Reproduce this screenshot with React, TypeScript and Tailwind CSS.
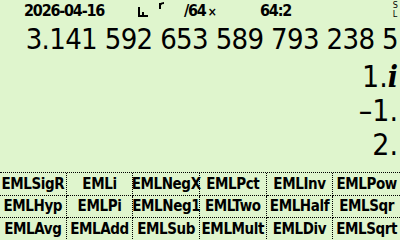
import React from "react";

const menu = [
  ["EMLSigR", "EMLi", "EMLNegX", "EMLPct", "EMLInv", "EMLPow"],
  ["EMLHyp", "EMLPi", "EMLNeg1", "EMLTwo", "EMLHalf", "EMLSqr"],
  ["EMLAvg", "EMLAdd", "EMLSub", "EMLMult", "EMLDiv", "EMLSqrt"],
];

export default function App() {
  return (
    <div
      className="w-[400px] h-[240px] bg-[#dff5cd] text-black flex flex-col overflow-hidden"
      style={{ fontFamily: '"DejaVu Sans", sans-serif' }}
    >
      {/* Header */}
      <div className="h-[22px] flex items-start font-bold font-stretch-condensed text-[16px] leading-[21px] tracking-[-1.2px]">
        <span className="ml-[24px] w-[112px]">2026-04-16</span>
        <svg width="12" height="22" viewBox="0 0 12 22" className="ml-[1px]">
          <path d="M2 7 V16 H11 M6 12 V16" stroke="black" strokeWidth="2" fill="none" />
        </svg>
        <svg width="8" height="22" viewBox="0 0 8 22" className="ml-[9px]">
          <path d="M2 3 V9 M2 5 Q3 3 6 3" stroke="black" strokeWidth="2" fill="none" />
        </svg>
        <span className="ml-[18px] w-[60px]">
          /64<span className="text-[12px] ml-[2px]">×</span>
        </span>
        <span className="ml-[16px] w-[100px]">64:2</span>
        <div className="ml-auto mr-[2px] flex flex-col text-[9px] leading-[9px] font-normal tracking-normal pt-[1px]">
          <span>S</span>
          <span>L</span>
        </div>
      </div>

      {/* Stack */}
      <div className="flex-1 flex flex-col justify-end items-end pr-[2px] font-stretch-condensed text-[30px] leading-[34px] pb-[10px]">
        <div className="whitespace-nowrap text-[29px] tracking-[-0.65px] mb-[4px]">3.141 592 653 589 793 238 5</div>
        <div className="whitespace-nowrap">
          1.
          <span
            className="italic font-bold"
            style={{ fontFamily: '"DejaVu Serif", serif' }}
          >
            i
          </span>
        </div>
        <div className="whitespace-nowrap">–1.</div>
        <div className="whitespace-nowrap">2.</div>
      </div>

      {/* Menu */}
      <div className="grid grid-cols-6 grid-rows-3 h-[69px] border-t border-dotted border-black font-bold font-stretch-condensed text-[15px] tracking-[-0.4px]">
        {menu.flat().map((label, i) => (
          <div
            key={label}
            className={
              "flex items-center justify-center border-dotted border-black " +
              (i % 6 !== 5 ? "border-r " : "") +
              (i < 12 ? "border-b" : "")
            }
          >
            {label}
          </div>
        ))}
      </div>
    </div>
  );
}
